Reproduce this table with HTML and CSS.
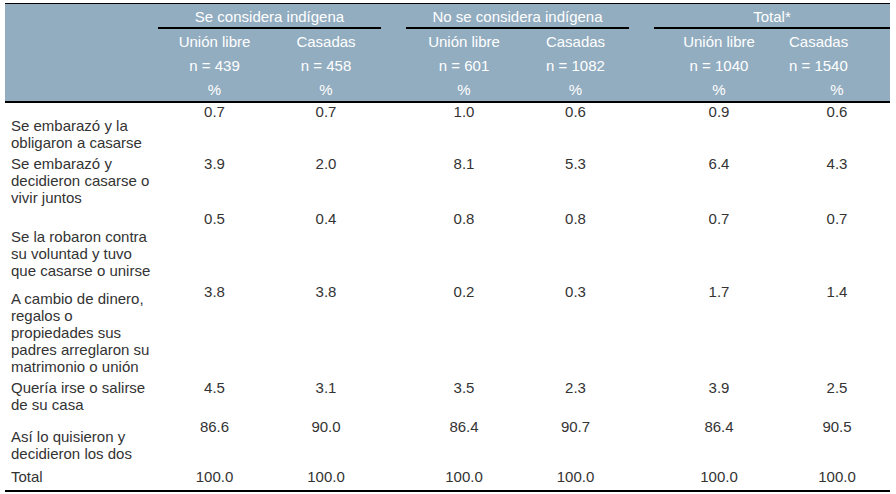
FILE: index.html
```html
<!DOCTYPE html>
<html lang="es">
<head>
<meta charset="utf-8">
<title>Tabla</title>
<link rel="stylesheet" href="styles.css">
</head>
<body>
<table class="tbl">
  <colgroup>
    <col class="c-label">
    <col class="c-a1"><col class="c-a2">
    <col class="c-sp">
    <col class="c-b1"><col class="c-b2">
    <col class="c-sp">
    <col class="c-t1"><col class="c-t2">
  </colgroup>
  <thead>
    <tr class="h1">
      <th class="lbl-head" rowspan="4"></th>
      <th class="grp" colspan="2">Se considera indígena</th>
      <th class="sp"></th>
      <th class="grp" colspan="2">No se considera indígena</th>
      <th class="sp"></th>
      <th class="grp" colspan="2">Total*</th>
    </tr>
    <tr>
      <th>Unión libre</th><th>Casadas</th><th class="sp"></th>
      <th>Unión libre</th><th>Casadas</th><th class="sp"></th>
      <th>Unión libre</th><th class="lft">Casadas</th>
    </tr>
    <tr>
      <th>n = 439</th><th>n = 458</th><th class="sp"></th>
      <th>n = 601</th><th>n = 1082</th><th class="sp"></th>
      <th>n = 1040</th><th class="lft">n = 1540</th>
    </tr>
    <tr class="h4">
      <th>%</th><th>%</th><th class="sp"></th>
      <th>%</th><th>%</th><th class="sp"></th>
      <th>%</th><th>%</th>
    </tr>
  </thead>
  <tbody>
    <tr>
      <td class="lbl pt14">Se embarazó y la obligaron a casarse</td>
      <td>0.7</td><td>0.7</td><td></td><td>1.0</td><td>0.6</td><td></td><td>0.9</td><td>0.6</td>
    </tr>
    <tr>
      <td class="lbl">Se embarazó y decidieron casarse o vivir juntos</td>
      <td>3.9</td><td>2.0</td><td></td><td>8.1</td><td>5.3</td><td></td><td>6.4</td><td>4.3</td>
    </tr>
    <tr>
      <td class="lbl pt18">Se la robaron contra su voluntad y tuvo que casarse o unirse</td>
      <td>0.5</td><td>0.4</td><td></td><td>0.8</td><td>0.8</td><td></td><td>0.7</td><td>0.7</td>
    </tr>
    <tr>
      <td class="lbl pt7">A cambio de dinero, regalos o propiedades sus padres arreglaron su matrimonio o unión</td>
      <td>3.8</td><td>3.8</td><td></td><td>0.2</td><td>0.3</td><td></td><td>1.7</td><td>1.4</td>
    </tr>
    <tr>
      <td class="lbl pb5">Quería irse o salirse de su casa</td>
      <td>4.5</td><td>3.1</td><td></td><td>3.5</td><td>2.3</td><td></td><td>3.9</td><td>2.5</td>
    </tr>
    <tr>
      <td class="lbl pt10 pb6">Así lo quisieron y decidieron los dos</td>
      <td>86.6</td><td>90.0</td><td></td><td>86.4</td><td>90.7</td><td></td><td>86.4</td><td>90.5</td>
    </tr>
    <tr class="last">
      <td class="lbl pb5">Total</td>
      <td>100.0</td><td>100.0</td><td></td><td>100.0</td><td>100.0</td><td></td><td>100.0</td><td>100.0</td>
    </tr>
  </tbody>
</table>
</body>
</html>
```

FILE: styles.css
```css
html, body {
  background: #ffffff;
}
body {
  margin: 3px 0 0 5px;
  font-family: "Liberation Sans", Arial, sans-serif;
  font-size: 15px;
  color: #333333;
}
.tbl {
  width: 885px;
  table-layout: fixed;
  border-collapse: separate;
  border-spacing: 0;
  border-top: 1px solid #000;
}
.c-label { width: 153px; }
.c-a1 { width: 113px; }
.c-a2 { width: 110px; }
.c-sp { width: 25px; }
.c-b1 { width: 116px; }
.c-b2 { width: 107px; }
.c-t1 { width: 130px; }
.c-t2 { width: 106px; }

thead th {
  background: #92adbf;
  color: #ffffff;
  font-weight: normal;
  line-height: 17px;
  padding: 4px 0 3px;
  text-align: center;
  white-space: nowrap;
}
thead .h1 th {
  padding: 4px 0 2px;
}
thead .h1 th.grp {
  border-bottom: 2px solid #000;
}
thead .h1 th.lbl-head {
  padding: 0;
  border-bottom: 2px solid #000;
}
thead .h4 th {
  border-bottom: 2px solid #000;
}
thead th.lft {
  text-align: left;
  padding-left: 5px;
}

tbody td {
  line-height: 17px;
  padding: 0 0 4px;
  text-align: center;
  vertical-align: top;
}
tbody td.lbl {
  text-align: left;
  padding: 0 6px 4px 6px;
}
tbody td.pt7 { padding-top: 7px; }
tbody td.pt10 { padding-top: 10px; }
tbody td.pt14 { padding-top: 14px; }
tbody td.pt18 { padding-top: 18px; }
tbody td.pb5 { padding-bottom: 5px; }
tbody td.pb6 { padding-bottom: 6px; }
tbody tr.last td {
  border-bottom: 2px solid #000;
}
```
